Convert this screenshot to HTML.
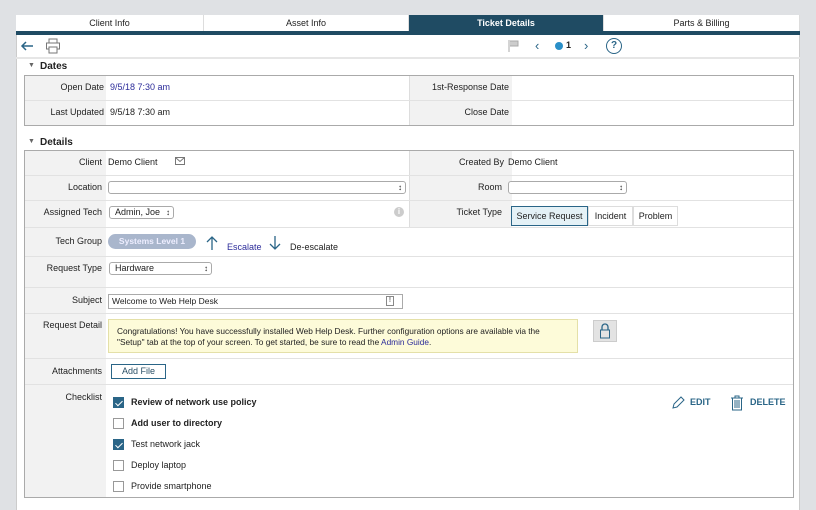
<!DOCTYPE html>
<html><head><meta charset="utf-8"><style>
*{margin:0;padding:0;box-sizing:border-box}
body{width:816px;height:510px;background:#dfe1e4;font-family:"Liberation Sans",sans-serif;font-size:9px;color:#222;position:relative;overflow:hidden}
.a{position:absolute}
.panel{left:16px;top:15px;width:784px;height:495px;background:#fff;border-left:1px solid #ccc;border-right:1px solid #ccc}
.tab{top:15px;height:16px;text-align:center;line-height:16px;font-size:9px;border-right:1px solid #ddd;background:#fff}
.lab{text-align:right;color:#222}
.lc{background:#f2f2f2}
.hl{height:1px;background:#e2e2e2}
.sel{border:1px solid #aaa;border-radius:3px;background:#fff;height:13px;font-size:9px;padding-left:5px;line-height:11px}
.sel:after{content:"\2195";position:absolute;right:3px;top:0;font-size:8px}
.cb{width:11px;height:11px;border:1px solid #999;background:#fff}
.cb.on{background:#2a6587;border-color:#2a6587}
.cb.on:after{content:"";position:absolute;left:3px;top:1px;width:3px;height:6px;border:solid #fff;border-width:0 1px 1px 0;transform:rotate(45deg)}
</style></head><body>
<div class="a panel"></div>
<div class="a tab" style="left:16px;width:188px">Client Info</div>
<div class="a tab" style="left:204px;width:205px">Asset Info</div>
<div class="a tab" style="left:409px;width:195px;background:#1f4b63;color:#fff;font-weight:bold">Ticket Details</div>
<div class="a tab" style="left:604px;width:196px">Parts &amp; Billing</div>
<div class="a" style="left:16px;top:31px;width:784px;height:4px;background:#1f4b63"></div>
<!-- toolbar -->
<svg class="a" style="left:20px;top:39px" width="14" height="14"><path d="M13 7H2M6 3L2 7l4 4" stroke="#2a6587" stroke-width="1.5" fill="none"/></svg>
<svg class="a" style="left:45px;top:38px" width="16" height="16"><rect x="4" y="1" width="8" height="4" fill="none" stroke="#777"/><rect x="1.5" y="5" width="13" height="6" fill="none" stroke="#777"/><rect x="4" y="9" width="8" height="6" fill="#fff" stroke="#777"/></svg>
<svg class="a" style="left:508px;top:40px" width="12" height="12"><path d="M1 0v12M2 1h8v5H2" stroke="#aaa" fill="#ccc"/></svg>
<div class="a" style="left:535px;top:38px;font-size:13px;color:#2a6587">&#8249;</div>
<div class="a" style="left:555px;top:42px;width:8px;height:8px;border-radius:50%;background:#2a8fc8"></div>
<div class="a" style="left:566px;top:40px;font-weight:bold;font-size:9px">1</div>
<div class="a" style="left:584px;top:38px;font-size:13px;color:#2a6587">&#8250;</div>
<div class="a" style="left:606px;top:38px;width:16px;height:16px;border:1.5px solid #2a6587;border-radius:50%;text-align:center;line-height:13px;font-weight:bold;color:#2a6587;font-size:10px">?</div>
<div class="a hl" style="left:16px;top:57px;width:784px;height:2px;background:#e6e6e6"></div>
<!-- Dates -->
<div class="a" style="left:28px;top:62px;font-size:7px;color:#666">&#9660;</div>
<div class="a" style="left:40px;top:61px;font-size:10px;font-weight:bold">Dates</div>
<div class="a" style="left:24px;top:75px;width:770px;height:51px;border:1px solid #aaa"></div>
<div class="a lc" style="left:25px;top:76px;width:81px;height:49px"></div>
<div class="a lc" style="left:410px;top:76px;width:102px;height:49px"></div>
<div class="a" style="left:409px;top:76px;width:1px;height:49px;background:#ddd"></div>
<div class="a hl" style="left:25px;top:100px;width:768px"></div>
<div class="a lab" style="left:25px;top:82px;width:79px">Open Date</div>
<div class="a" style="left:110px;top:82px;color:#2c2c9a">9/5/18 7:30 am</div>
<div class="a lab" style="left:25px;top:107px;width:79px">Last Updated</div>
<div class="a" style="left:110px;top:107px">9/5/18 7:30 am</div>
<div class="a lab" style="left:410px;top:82px;width:99px">1st-Response Date</div>
<div class="a lab" style="left:410px;top:107px;width:99px">Close Date</div>
<!-- Details -->
<div class="a" style="left:28px;top:138px;font-size:7px;color:#666">&#9660;</div>
<div class="a" style="left:40px;top:137px;font-size:10px;font-weight:bold">Details</div>
<div class="a" style="left:24px;top:150px;width:770px;height:348px;border:1px solid #aaa"></div>
<div class="a lc" style="left:25px;top:151px;width:81px;height:346px"></div>
<div class="a lc" style="left:410px;top:151px;width:102px;height:76px"></div>
<div class="a" style="left:409px;top:151px;width:1px;height:76px;background:#ddd"></div>
<div class="a hl" style="left:25px;top:175px;width:768px"></div>
<div class="a hl" style="left:25px;top:200px;width:768px"></div>
<div class="a hl" style="left:25px;top:227px;width:768px"></div>
<div class="a hl" style="left:25px;top:256px;width:768px"></div>
<div class="a hl" style="left:25px;top:287px;width:768px"></div>
<div class="a hl" style="left:25px;top:313px;width:768px"></div>
<div class="a hl" style="left:25px;top:358px;width:768px"></div>
<div class="a hl" style="left:25px;top:384px;width:768px"></div>
<div class="a lab" style="left:25px;top:157px;width:77px">Client</div>
<div class="a" style="left:108px;top:157px">Demo Client</div>
<svg class="a" style="left:175px;top:157px" width="10" height="8"><rect x=".5" y=".5" width="9" height="7" fill="none" stroke="#777"/><path d="M.5 .5l4.5 4 4.5-4" stroke="#777" fill="none"/></svg>
<div class="a lab" style="left:410px;top:157px;width:94px">Created By</div>
<div class="a" style="left:508px;top:157px">Demo Client</div>
<div class="a lab" style="left:25px;top:182px;width:77px">Location</div>
<div class="a sel" style="left:108px;top:181px;width:298px"></div>
<div class="a lab" style="left:410px;top:182px;width:92px">Room</div>
<div class="a sel" style="left:508px;top:181px;width:119px"></div>
<div class="a lab" style="left:25px;top:207px;width:77px">Assigned Tech</div>
<div class="a sel" style="left:109px;top:206px;width:65px">Admin, Joe</div>
<div class="a" style="left:394px;top:207px;width:10px;height:10px;border-radius:50%;background:#ccc;color:#fff;font-size:8px;text-align:center;line-height:10px;font-weight:bold">i</div>
<div class="a lab" style="left:410px;top:207px;width:92px">Ticket Type</div>
<div class="a" style="left:511px;top:206px;width:77px;height:20px;border:1px solid #2a6587;background:#e4f1f6;text-align:center;line-height:18px">Service Request</div>
<div class="a" style="left:588px;top:206px;width:45px;height:20px;border:1px solid #ddd;text-align:center;line-height:18px">Incident</div>
<div class="a" style="left:633px;top:206px;width:45px;height:20px;border:1px solid #ddd;text-align:center;line-height:18px">Problem</div>
<div class="a lab" style="left:25px;top:236px;width:77px">Tech Group</div>
<div class="a" style="left:108px;top:234px;width:88px;height:15px;border-radius:8px;background:#a9b6cc;color:#eef;font-weight:bold;text-align:center;line-height:15px;font-size:8.5px">Systems Level 1</div>
<svg class="a" style="left:206px;top:236px" width="12" height="14"><path d="M6 14V1M1 6l5-5 5 5" stroke="#2a6587" stroke-width="1.3" fill="none"/></svg>
<div class="a" style="left:227px;top:242px;color:#2c2c9a">Escalate</div>
<svg class="a" style="left:269px;top:236px" width="12" height="14"><path d="M6 0v13M1 8l5 5 5-5" stroke="#2a6587" stroke-width="1.3" fill="none"/></svg>
<div class="a" style="left:290px;top:242px">De-escalate</div>
<div class="a lab" style="left:25px;top:263px;width:77px">Request Type</div>
<div class="a sel" style="left:109px;top:262px;width:103px">Hardware</div>
<div class="a lab" style="left:25px;top:295px;width:77px">Subject</div>
<div class="a" style="left:108px;top:294px;width:295px;height:15px;border:1px solid #aaa;line-height:13px;padding-left:3px;font-size:8.5px">Welcome to Web Help Desk</div>
<div class="a" style="left:386px;top:296px;width:8px;height:10px;border:1px solid #888;font-size:7px;text-align:center;line-height:8px">!</div>
<div class="a lab" style="left:25px;top:320px;width:77px">Request Detail</div>
<div class="a" style="left:108px;top:319px;width:470px;height:34px;background:#fdfbd9;border:1px solid #e4e0a8;padding:6px 8px;font-size:8.3px;line-height:11px">Congratulations! You have successfully installed Web Help Desk. Further configuration options are available via the "Setup" tab at the top of your screen. To get started, be sure to read the <span style="color:#2c2c9a">Admin Guide</span>.</div>
<div class="a" style="left:593px;top:320px;width:24px;height:22px;background:#e3e3e3;border:1px solid #ccc"></div>
<svg class="a" style="left:599px;top:323px" width="12" height="16"><path d="M3 7V4a3 3 0 0 1 6 0v3" stroke="#2a6587" fill="none" stroke-width="1.3"/><rect x="1.5" y="7" width="9" height="8" fill="none" stroke="#2a6587"/></svg>
<div class="a lab" style="left:25px;top:366px;width:77px">Attachments</div>
<div class="a" style="left:111px;top:364px;width:55px;height:15px;border:1px solid #2a6587;text-align:center;line-height:13px;color:#2a4f66">Add File</div>
<div class="a lab" style="left:25px;top:392px;width:77px">Checklist</div>
<div class="a cb on" style="left:113px;top:397px"></div><div class="a" style="left:131px;top:397px;font-weight:bold">Review of network use policy</div>
<div class="a cb" style="left:113px;top:418px"></div><div class="a" style="left:131px;top:418px;font-weight:bold">Add user to directory</div>
<div class="a cb on" style="left:113px;top:439px"></div><div class="a" style="left:131px;top:439px">Test network jack</div>
<div class="a cb" style="left:113px;top:460px"></div><div class="a" style="left:131px;top:460px">Deploy laptop</div>
<div class="a cb" style="left:113px;top:481px"></div><div class="a" style="left:131px;top:481px">Provide smartphone</div>
<svg class="a" style="left:671px;top:395px" width="14" height="15"><path d="M2 13l1-4 7-7 3 3-7 7z" stroke="#2a6587" fill="none"/></svg>
<div class="a" style="left:690px;top:397px;font-weight:bold;color:#2a6587">EDIT</div>
<svg class="a" style="left:730px;top:394px" width="14" height="17"><path d="M1 4h12M5 4V2h4v2M2.5 4v12h9V4M5 6v8M7 6v8M9 6v8" stroke="#2a6587" fill="none"/></svg>
<div class="a" style="left:750px;top:397px;font-weight:bold;color:#2a6587">DELETE</div>
</body></html>
